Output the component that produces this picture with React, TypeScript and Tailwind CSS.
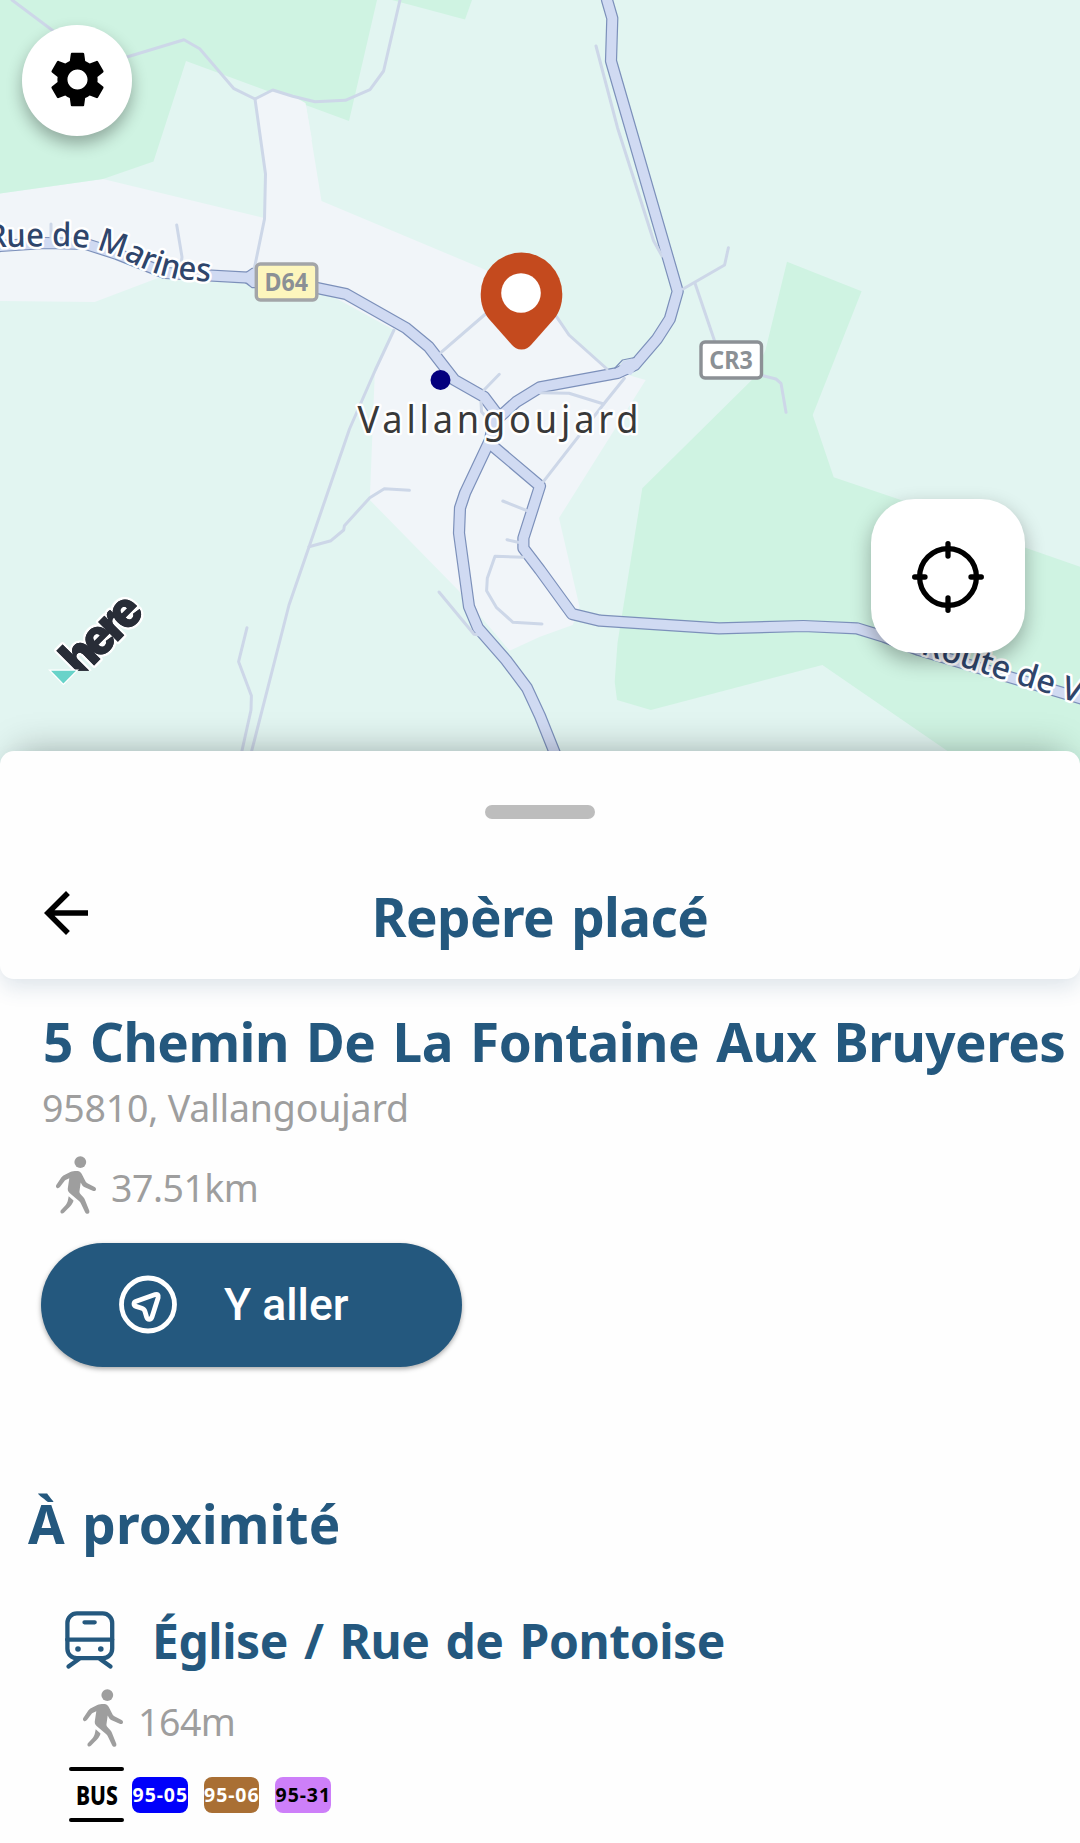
import type { ReactNode } from "react";
import { MdArrowBack, MdSettings } from "react-icons/md";

const mainRoads = [
  "M607 -6 L607 0 L612.3 18.3 L611 61 L677.7 291.3 L669.8 319 L657 339 L634.7 365 L617.5 373 L540 387.3 L516.5 401.7 L494 422",
  "M-6 247 L0 246 L45 243 L86 244 L117 254 L165 273 L248 277.7 L317 288 L346 294 L406 328 L428.7 346.7 L454.5 380 L484 396.7 L497 414 L494 422",
  "M494 418 L490 440 L465 493 L460 508 L459 533 L469 606.7 L478 628 L506 660 L527 688 L540 716 L556 756",
  "M488 442 L540 486 L523.4 538 L523.4 548.3 L540 570 L572 614 L600 620.7 L719 628.3 L803.4 626 L856.8 628.3 L884 636.7 L918.8 650 L1090 701",
];

const minorRoads = [
  "M12 0 L53 30.7 L90 68 L127 57 L184 39.7 L199.7 48.7 L233.5 88.3 L255 99 L272.7 90 L292.7 96.3 L315 101.7 L345.4 100.3 L370 89.7 L383.6 71 L400 0",
  "M255 99 L265.5 174 L264.5 219 L254 270",
  "M51 224 L51 238",
  "M176.7 225 L182 257 L181 265",
  "M394 330 L375.3 370 L349.5 429 L309 547 L289 605 L251.4 752",
  "M409.4 490.3 L384.3 488.7 L369.8 497.7 L344.4 525.7 L343.7 530 L331 540.7 L309 546.7",
  "M247 627.7 L238.6 661.7 L251.4 695.7 L251 710 L241.7 752",
  "M439 592 L474 634.3 L480 635",
  "M502.8 501 L527 510.7",
  "M507 539.7 L518 542.3",
  "M523.4 557.3 L495 556.3 L487.3 578.3 L486.6 590.7 L496.6 607.7 L513 622.3 L542 624",
  "M440.8 352.7 L485.5 314",
  "M556.5 316.7 L569 335 L607 369",
  "M499.3 374.3 L484 390",
  "M481 401.7 L481.5 411.7 L487 418",
  "M624.4 378.3 L603.7 404 L543.4 481.7",
  "M540 392.7 L569 393.3 L603.7 404",
  "M596 46 L617.5 127.7 L653.6 240.7 L662 256",
  "M683 289 L724.6 265 L728.4 247.7",
  "M695 283.3 L714.6 341",
  "M763 375.7 L776 379 L781 383.3 L786 412.3",
];

const mapFont = "'Noto Sans', 'Open Sans', sans-serif";

function RoadShield({ x, y, fill, stroke, children }: { x: number; y: number; fill: string; stroke: string; children: ReactNode }) {
  return (
    <g>
      <rect x={x + 1.5} y={y + 1.5} width={60.5} height={36} rx={4} fill={fill} stroke={stroke} strokeWidth={3.4} />
      <text x={x + 31.5} y={y + 28} textAnchor="middle" fontSize={24.5} fontWeight={700} fill="#8b9095" textLength={43.5} lengthAdjust="spacingAndGlyphs">
        {children}
      </text>
    </g>
  );
}

function HereLogo() {
  const word = {
    transform: "translate(81 678.5) rotate(-45) scale(0.9 1)",
    fontFamily: "Inter, sans-serif",
    fontWeight: 900,
    fontSize: 51,
    letterSpacing: -4.3,
  };
  return (
    <g>
      <defs>
        <clipPath id="logo-clip">
          <rect x={0} y={560} width={200} height={110.7} />
        </clipPath>
      </defs>
      <g clipPath="url(#logo-clip)">
        <text {...word} fill="#282d37" stroke="#ffffff" strokeWidth={5} strokeLinejoin="round" paintOrder="stroke">here</text>
        <text {...word} fill="#282d37" aria-hidden="true">here</text>
      </g>
      <path d="M51 670.7 H76 L63.4 683.5 Z" fill="#68d3c9" stroke="#fff" strokeWidth={2.5} paintOrder="stroke" />
    </g>
  );
}

function MapView() {
  return (
    <svg className="absolute inset-0 block" width={1080} height={766} viewBox="0 0 1080 766" fontFamily={mapFont}>
      <defs>
        <path id="marines" d="M-13 247.5 Q20 246.5 45 246.5 Q75 245 97 250 Q112 253 130 262 Q150 273 174 278.5 L236 284" />
        <path id="route" d="M920 653.5 L1110 713" />
      </defs>
      <rect width={1080} height={766} fill="#e2f5f1" />
      <path
        d="M0 193.5 L103 179 L264 218 L265 174 L255 99 L273 90 L293 96 L305.5 103 L321.5 201 L486 270 L556 316 L569 335 L607 369 L645.7 380 L559 518 L579.6 607 L572.7 625 L540 636.7 L509.6 650.7 L458 590 L369.8 500 L374.7 375 L394 330 L317 288 L158 278 L94.7 302 L0 301 Z"
        fill="#f1f5f9"
      />
      <g fill="#cff3e2">
        <path d="M0 0 H377 L349 121 L186 61 L153.5 161.5 L103 179 L0 193.5 Z" />
        <path d="M392 0 L465 19.5 L472 0 Z" />
        <path d="M787 261.7 L861.6 291.3 L812.7 415 L833.7 477.3 L898 499 L1025.5 547.7 L1080 566.7 V766 H968 L944.6 749 L822.4 665 L650.9 710 L617 700 L614.7 681.7 L617.5 643 L642.3 488.3 L751.8 380 L765.5 350 Z" />
      </g>
      <path d="M254 99 L273 90 L293 96 L305.5 103 L312 140 L262 140 Z" fill="#f1f5f9" />
      <g fill="none" strokeLinejoin="round">
        {mainRoads.map((d) => (
          <path key={d} d={d} stroke="#7c90ba" strokeWidth={12.2} />
        ))}
        <path d="M244.5 273.5 L252 268.5 H262 V287.5 H252 L244.5 282 Z" fill="#7c90ba" stroke="#7c90ba" strokeWidth={1.5} />
        <g stroke="#cdd7e8" strokeWidth={3} strokeLinecap="round">
          {minorRoads.map((d) => (
            <path key={d} d={d} />
          ))}
        </g>
        {mainRoads.map((d) => (
          <path key={d} d={d} stroke="#d0daf2" strokeWidth={9.8} />
        ))}
        <path d="M617 370 L623 361 L634 358 L640 364 L631 375 Z" fill="#d0daf2" stroke="none" />
        <path d="M614.5 368.5 L622.5 360 L634.5 357.5" stroke="#7c90ba" strokeWidth={1.2} />
        <path d="M245 274 L252 269 H262 V287 H252 L245 281 Z" fill="#d0daf2" stroke="none" />
      </g>
      <g fill="#2f456b" stroke="#ffffff" strokeWidth={5} strokeLinejoin="round" paintOrder="stroke" fontSize={32.5} fontWeight={500}>
        <text>
          <textPath href="#marines" textLength={229} lengthAdjust="spacingAndGlyphs">Rue de Marines</textPath>
        </text>
        <text>
          <textPath href="#route" textLength={166} lengthAdjust="spacingAndGlyphs">Route de V</textPath>
        </text>
      </g>
      <RoadShield x={254.8} y={262.5} fill="#fdf6bd" stroke="#a3a5a8">D64</RoadShield>
      <RoadShield x={699.5} y={340.5} fill="#ffffff" stroke="#8c9095">CR3</RoadShield>
      <path d="M521.5 349.5 C517 349.5 514.5 347.5 512 345 L489 319 C483.5 312.5 480.7 304 480.7 294 A40.8 41.5 0 0 1 562.3 294 C562.3 304 559.5 312.5 554 319 L531 345 C528.5 347.5 526 349.5 521.5 349.5 Z" fill="#c44a1e" />
      <circle cx={521} cy={293} r={19.8} fill="#fff" />
      <circle cx={440.5} cy={380} r={10} fill="#05007e" />
      <text transform="translate(357.5 432.7) scale(0.94 1)" fontSize={38.5} fill="#393939" stroke="#ffffff" strokeWidth={5} strokeLinejoin="round" paintOrder="stroke" textLength={299}>
        Vallangoujard
      </text>
      <HereLogo />
    </svg>
  );
}

function TargetIcon() {
  return (
    <svg width={72} height={74} viewBox="0 0 72 74" fill="none" stroke="#000" strokeWidth={5.3} strokeLinecap="round">
      <circle cx={36} cy={38} r={28.4} />
      <path d="M36 4.700 V17 M36 59 V71.300 M2.7 38 H13 M59 38 H69.3" />
    </svg>
  );
}

function NavigateIcon() {
  return (
    <svg width={58} height={59} viewBox="0 0 58 59" fill="none" stroke="#fff" strokeWidth={4.8} strokeLinejoin="round">
      <circle cx={29} cy={29.5} r={26.5} />
      <path d="M17.2 26.2 L36.2 19.6 C38.6 18.9 39.9 20.2 39.2 22.6 L33 41.9 C31.9 45 28.6 45 27.6 42 L25.9 36.3 C25.4 34.6 24.4 33.7 22.8 33.2 L17 31.4 C14.3 30.5 14.3 27.2 17.2 26.2 Z" />
    </svg>
  );
}

function TrainIcon() {
  return (
    <svg width={50} height={59} viewBox="0 0 50 59" fill="none" stroke="#24587e" strokeWidth={4.3} strokeLinecap="round" strokeLinejoin="round">
      <rect x={2.4} y={2.4} width={44.8} height={44.8} rx={9.5} />
      <path d="M2.2 28.6 H47.2 M19.5 11.3 H29.7" />
      <path d="M14 48 L3.5 55.5 M35 48 L45.5 55.5" />
      <g fill="#24587e" stroke="none">
        <circle cx={13} cy={38} r={2.8} />
        <circle cx={35.8} cy={38} r={2.8} />
      </g>
    </svg>
  );
}

function WalkIcon() {
  return (
    <svg width={40} height={58} viewBox="0 0 40 58" fill="currentColor" className="shrink-0">
      <circle cx={24.3} cy={6.1} r={5.9} />
      <path d="M21.5 14.9 C23.5 15 25 16.2 25.9 18.2 L29.6 25.4 C30 26.2 30.6 26.7 31.4 27.2 L38.6 30.9 C41.3 32.5 39.9 36 36.7 34.8 L28.2 31 C27.3 30.6 26.7 30 26.2 29.2 L24.7 26.6 L23.5 35 C23.3 36.3 23.6 37 24.4 37.9 L27.6 41.5 C28.3 42.4 28.7 43.2 29.1 44.2 L33.2 54.6 C34.2 57.7 30.6 59.1 29.1 56.3 L24.9 47.5 C24.5 46.6 24 46 23.3 45.3 L13.9 37.2 C12.2 35.7 11.6 34.3 11.8 32.2 L13.3 22.2 L9.6 24 C9 24.3 8.7 24.6 8.3 25.2 L3.9 31 C2 33.5 -1.1 31.5 0.3 28.9 L5.3 21.6 C5.9 20.7 6.5 20.2 7.4 19.6 L14.3 16 C16.6 15 18.9 14.8 21.5 14.9 Z" />
      <path d="M12.7 40.2 L17.5 44.5 C17.3 45.5 17 46.3 16.4 47.2 C15 49.7 13.7 51.1 11.8 52.8 L7.9 56.8 C5.6 58.8 3.2 56.2 5.1 54 L9.5 49.3 C10.9 47.6 11.7 45.8 12 43.8 Z" />
    </svg>
  );
}

function Walk({ distance }: { distance: string }) {
  return (
    <div className="flex h-[58px] items-center text-[#9e9e9e]">
      <WalkIcon />
      <span className="ml-[15px] pt-[7px] text-[37.5px] leading-[50px] tracking-[-0.5px]">{distance}</span>
    </div>
  );
}

const lines = [
  { name: "95-05", color: "bg-[#0000fb] text-white" },
  { name: "95-06", color: "bg-[#a96f34] text-white" },
  { name: "95-31", color: "bg-[#cd7ff9] text-black" },
];

export default function App() {
  return (
    <div className="relative flex h-[1843px] w-[1080px] flex-col overflow-hidden bg-[#fefefe] font-['Noto_Sans','Open_Sans',sans-serif]">
      <section className="relative h-[751px] shrink-0">
        <MapView />
        <button className="absolute left-[22px] top-[25px] flex h-[111px] w-[110px] items-center justify-center rounded-full bg-white pb-[2px] text-black shadow-[0_8px_16px_rgba(0,0,0,0.3)]">
          <MdSettings size={67} />
        </button>
        <button className="absolute left-[871px] top-[499px] flex h-[154px] w-[154px] items-center justify-center rounded-[44px] bg-white shadow-[0_8px_20px_rgba(0,0,0,0.3)]">
          <TargetIcon />
        </button>
      </section>

      <header className="relative flex h-[227.5px] shrink-0 flex-col items-center rounded-[14px] bg-[#fefefe] shadow-[0_-16px_34px_-16px_rgba(0,0,0,0.28),0_10px_20px_rgba(36,88,126,0.13)]">
        <div className="mt-[54px] h-[14px] w-[110px] shrink-0 rounded-full bg-[#bdbdbd]" />
        <div className="mt-[54px] flex h-[80px] w-full items-center">
          <MdArrowBack size={66} className="ml-[33px] shrink-0 text-black" />
          <h1 className="flex-1 pr-[99px] pt-[8px] text-center text-[53px] font-bold leading-[72px] tracking-[-0.6px] text-[#24587e] [word-spacing:4px]">Repère placé</h1>
        </div>
      </header>

      <main className="flex flex-1 flex-col bg-[#fefefe]">
        <section className="flex flex-col pl-[41px]">
          <h2 className="whitespace-nowrap pl-[2px] pt-[23px] text-[53px] font-bold leading-[80px] tracking-[-0.55px] text-[#24587e] [word-spacing:4px]">5 Chemin De La Fontaine Aux Bruyeres</h2>
          <p className="pl-px pt-px text-[37.5px] leading-[50px] tracking-[-0.2px] text-[#9e9e9e]">95810, Vallangoujard</p>
          <div className="mt-[23px] pl-[15px]">
            <Walk distance="37.51km" />
          </div>
          <button className="mt-[29px] flex h-[124.5px] w-[421px] items-center rounded-full bg-[#24587e] pl-[78px] font-[Roboto,sans-serif] text-[44.5px] font-medium text-white shadow-[0_2px_5px_rgba(0,0,0,0.35)]">
            <NavigateIcon />
            <span className="ml-[47px] pt-[2px]">Y aller</span>
          </button>
        </section>

        <section className="flex flex-col">
          <h2 className="pl-[28px] pt-[121px] text-[53px] font-bold leading-[72px] tracking-[0.15px] text-[#24587e] [word-spacing:3.5px]">À proximité</h2>
          <div className="mt-[48px] flex h-[64px] items-center pl-[65px]">
            <TrainIcon />
            <h3 className="ml-[37px] whitespace-nowrap pt-[2px] text-[48px] font-bold leading-[64px] tracking-[-0.45px] text-[#24587e] [word-spacing:4px]">Église / Rue de Pontoise</h3>
          </div>
          <div className="mt-[17px] pl-[83px]">
            <Walk distance="164m" />
          </div>
          <div className="mt-[20px] flex h-[55px] items-center pl-[69px]">
            <div className="flex h-full w-[55px] flex-col items-center justify-between">
              <div className="h-[4px] w-full shrink-0 rounded-full bg-black" />
              <span className="scale-x-[0.78] text-[27px] font-extrabold leading-none text-black">BUS</span>
              <div className="h-[4px] w-full shrink-0 rounded-full bg-black" />
            </div>
            <div className="ml-[8px] flex gap-[16px] text-[19.5px] font-bold tracking-[0.9px]">
              {lines.map((line) => (
                <span key={line.name} className={`flex h-[36px] w-[55.5px] items-center justify-center whitespace-nowrap rounded-[8px] pl-px ${line.color}`}>
                  {line.name}
                </span>
              ))}
            </div>
          </div>
        </section>
      </main>
    </div>
  );
}
